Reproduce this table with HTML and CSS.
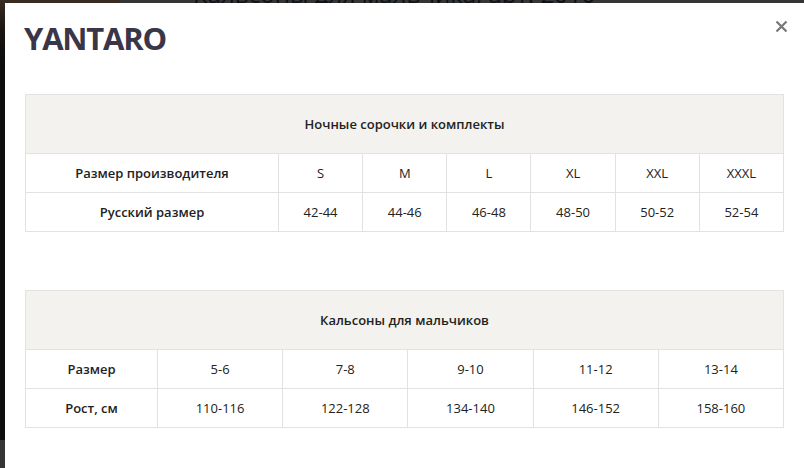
FILE: index.html
```html
<!DOCTYPE html>
<html lang="ru">
<head>
<meta charset="utf-8">
<title>YANTARO</title>
<link rel="stylesheet" href="styles.css">
</head>
<body>
<div class="backdrop">
  <div class="bg-left"></div>
  <h1 class="bg-title">Кальсоны для мальчика, арт. 2010</h1>
</div>
<div class="modal">
  <button class="close" aria-label="Закрыть">
    <svg width="13" height="13" viewBox="0 0 13 13"><path d="M1.5 1.5 L11.5 11.5 M11.5 1.5 L1.5 11.5" stroke="#777" stroke-width="2.2" fill="none"/></svg>
  </button>
  <h2 class="brand">YANTARO</h2>

  <table class="sizes sizes-1">
    <colgroup><col class="c-first1"><col><col><col><col><col><col></colgroup>
    <thead>
      <tr><th colspan="7">Ночные сорочки и комплекты</th></tr>
    </thead>
    <tbody>
      <tr><td class="lbl">Размер производителя</td><td>S</td><td>M</td><td>L</td><td>XL</td><td>XXL</td><td>XXXL</td></tr>
      <tr><td class="lbl">Русский размер</td><td>42-44</td><td>44-46</td><td>46-48</td><td>48-50</td><td>50-52</td><td>52-54</td></tr>
    </tbody>
  </table>

  <table class="sizes sizes-2">
    <colgroup><col class="c-first2"><col><col><col><col><col></colgroup>
    <thead>
      <tr><th colspan="6">Кальсоны для мальчиков</th></tr>
    </thead>
    <tbody>
      <tr><td class="lbl">Размер</td><td>5-6</td><td>7-8</td><td>9-10</td><td>11-12</td><td>13-14</td></tr>
      <tr><td class="lbl">Рост, см</td><td>110-116</td><td>122-128</td><td>134-140</td><td>146-152</td><td>158-160</td></tr>
    </tbody>
  </table>
</div>
</body>
</html>
```
FILE: styles.css
```css
html, body {
  margin: 0;
  padding: 0;
  height: 100%;
  overflow: hidden;
}
body {
  background: #353535;
  font-family: "Open Sans", "Liberation Sans", sans-serif;
  position: relative;
}
.backdrop {
  position: absolute;
  inset: 0;
}
.bg-left {
  position: absolute;
  left: 0;
  top: 0;
  width: 120px;
  height: 440px;
  background: linear-gradient(to bottom, #3a2c20 0, #1a1512 30px, #0e0e0e 60px, #0e0e0e 100%);
}
.bg-title {
  position: absolute;
  left: 193px;
  top: -23px;
  margin: 0;
  font-size: 24px;
  font-weight: 400;
  color: #0c1118;
  white-space: nowrap;
}
.modal {
  position: absolute;
  left: 5px;
  top: 3px;
  right: 0;
  bottom: 0;
  background: #fff;
  padding: 0 20px 0 20px;
  box-sizing: border-box;
}
.close {
  position: absolute;
  top: 14px;
  right: 13px;
  border: 0;
  background: none;
  padding: 3px;
  line-height: 0;
  cursor: pointer;
}
.brand {
  margin: 0;
  padding: 14px 0 0 0;
  margin-left: -1px;
  font-size: 31px;
  font-weight: 700;
  letter-spacing: -1.2px;
  color: #3a3648;
  line-height: 42px;
}
.sizes {
  width: 759px;
  border-collapse: collapse;
  table-layout: fixed;
  font-size: 13px;
  color: #222;
}
.sizes-1 { margin-top: 35px; }
.sizes-2 { margin-top: 58px; }
.c-first1 { width: 253px; }
.c-first2 { width: 132px; }
.sizes th, .sizes td {
  border: 1px solid #e2e2e2;
  text-align: center;
  padding: 0;
}
.sizes th {
  background: #f3f2ee;
  font-weight: 600;
  height: 58px;
}
.sizes td {
  height: 38px;
  font-weight: 400;
}
.sizes td.lbl {
  font-weight: 600;
}
```
